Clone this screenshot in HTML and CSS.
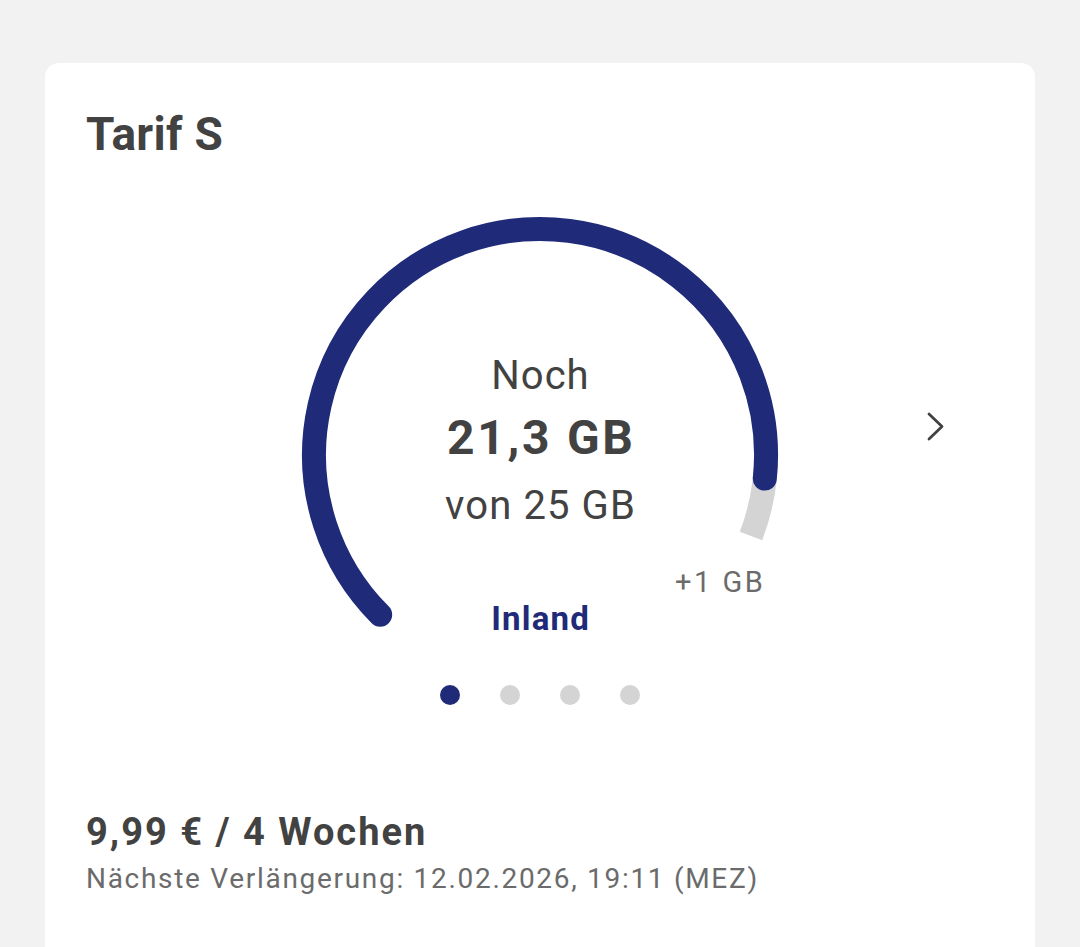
FILE: index.html
```html
<!DOCTYPE html>
<html lang="de">
<head>
<meta charset="utf-8">
<title>Tarif S</title>
<link rel="stylesheet" href="styles.css">
</head>
<body>
<main class="card">
  <h1 class="title">Tarif S</h1>
  <section class="gauge-row">
    <div class="gauge">
      <svg class="gauge-svg" width="500" height="430" viewBox="0 0 500 430" aria-hidden="true">
        <path d="M 476 250 A 226 226 0 0 1 461 331" fill="none" stroke="#d4d4d4" stroke-width="24" stroke-linecap="butt"/>
        <path d="M 90.2 409.8 A 226 226 0 1 1 474.8 273.6" fill="none" stroke="#1f2a78" stroke-width="24" stroke-linecap="round"/>
      </svg>
      <div class="gauge-text">
        <div class="noch">Noch</div>
        <div class="amount">21,3 GB</div>
        <div class="total">von 25 GB</div>
        <div class="region">Inland</div>
      </div>
      <div class="extra">+1 GB</div>
    </div>
    <svg class="chevron" width="24" height="32" viewBox="0 0 24 32" aria-hidden="true">
      <path d="M 5 3 L 18 15.5 L 5 28" fill="none" stroke="#424242" stroke-width="2.8" stroke-linecap="round" stroke-linejoin="round"/>
    </svg>
  </section>
  <div class="dots">
    <span class="dot active"></span>
    <span class="dot"></span>
    <span class="dot"></span>
    <span class="dot"></span>
  </div>
  <section class="plan">
    <div class="price">9,99 € / 4 Wochen</div>
    <div class="renewal">Nächste Verlängerung: 12.02.2026, 19:11 (MEZ)</div>
  </section>
</main>
</body>
</html>
```

FILE: styles.css
```css
* { box-sizing: border-box; }
html, body { margin: 0; padding: 0; }
body {
  background: #f2f2f2;
  font-family: Roboto, "Noto Sans", "Liberation Sans", sans-serif;
  color: #424242;
  padding: 63px 45px 0;
  height: 947px;
  overflow: hidden;
}
.card {
  background: #ffffff;
  border-radius: 14px 14px 0 0;
  padding: 44px 41px 60px;
  min-height: 900px;
}
.title {
  margin: 0;
  font-size: 46px;
  line-height: 54px;
  font-weight: 700;
  letter-spacing: 0.3px;
}
.gauge-row {
  position: relative;
  display: flex;
  justify-content: center;
  margin-top: 44px;
}
.gauge {
  position: relative;
  width: 500px;
  height: 430px;
}
.gauge-svg { display: block; }
.gauge-text {
  position: absolute;
  left: 0;
  right: 0;
  top: 147px;
  display: flex;
  flex-direction: column;
  align-items: center;
}
.noch {
  font-size: 40px;
  line-height: 48px;
  letter-spacing: 1px;
  margin-right: -1px;
}
.amount {
  margin-top: 10px;
  font-size: 48px;
  line-height: 56px;
  font-weight: 700;
  letter-spacing: 2.7px;
  margin-right: -2.7px;
}
.total {
  margin-top: 16px;
  font-size: 40px;
  line-height: 48px;
  letter-spacing: 1.1px;
  margin-right: -1.1px;
}
.region {
  margin-top: 70px;
  font-size: 33px;
  line-height: 38px;
  font-weight: 700;
  color: #1f2a78;
  letter-spacing: 1.2px;
  margin-right: -1.2px;
}
.extra {
  position: absolute;
  left: 385px;
  top: 360px;
  font-size: 29px;
  line-height: 34px;
  color: #6b6b6b;
  letter-spacing: 2.5px;
}
.chevron {
  position: absolute;
  right: 46px;
  top: 206px;
}
.dots {
  display: flex;
  justify-content: center;
  gap: 40px;
  margin-top: 50px;
}
.dot {
  width: 20px;
  height: 20px;
  border-radius: 50%;
  background: #d4d4d4;
}
.dot.active { background: #1f2a78; }
.plan { margin-top: 104px; }
.price {
  font-size: 38px;
  line-height: 46px;
  font-weight: 700;
  letter-spacing: 2px;
}
.renewal {
  margin-top: 7px;
  font-size: 28px;
  line-height: 34px;
  color: #6b6b6b;
  letter-spacing: 1.7px;
}
```
